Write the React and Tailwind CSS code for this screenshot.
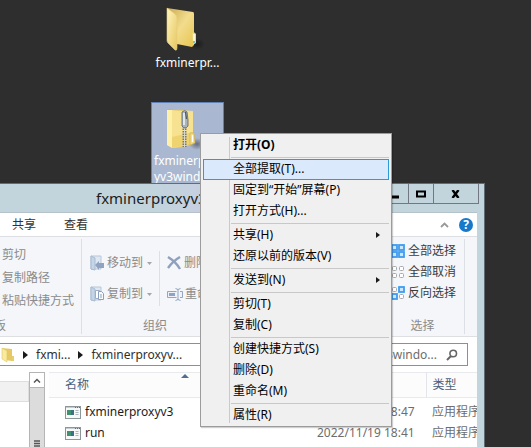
import React from "react";

function FolderIcon({ zip = false }) {
  return (
    <svg width="42" height="46" viewBox="0 0 42 46" aria-hidden="true">
      <defs>
        <linearGradient id="front" x1="0" x2="1" y1="0" y2="1">
          <stop offset="0" stopColor="#fff6bd" />
          <stop offset="1" stopColor="#e6c560" />
        </linearGradient>
        <linearGradient id="back" x1="0" x2="1" y1="0" y2="1">
          <stop offset="0" stopColor="#c9a951" />
          <stop offset="0.5" stopColor="#f2dc8d" />
          <stop offset="1" stopColor="#e8c54e" />
        </linearGradient>
        <radialGradient id="shade">
          <stop offset="0" stopColor="#000" stopOpacity="0.4" />
          <stop offset="1" stopColor="#000" stopOpacity="0" />
        </radialGradient>
      </defs>
      <ellipse cx="33" cy="37" rx="8" ry="6" fill="url(#shade)" />
      {zip ? (
        <>
          <path d="M3 3l4-1 22 2v33l-9 3-10 1-7-3z" fill="url(#back)" />
          <path d="M3 3l5 0v38l-5-3z" fill="#fff1a8" />
          <path d="M8 3l21 2v31l-21 5z" fill="#f6e291" />
          <path d="M8 30l21-5v11l-21 5z" fill="#ecca5c" opacity="0.6" />
          <path d="M26 26h4l1 10-5 2z" fill="#f3dc80" stroke="#c9a84b" strokeWidth="0.6" />
          <path d="M28.500 28v7" stroke="#fff" strokeWidth="1.200" />
          <path d="M20.500 14v26" stroke="#73777b" strokeWidth="4" strokeDasharray="1.5 1" />
          <path d="M20.500 16v24" stroke="#d8d8ce" strokeWidth="1" />
          <path d="M18 5q3-3 5 0l1 8 0 6q-3 4-6 0l0-6z" fill="#a9b4bd" stroke="#59636b" strokeWidth="0.8" />
          <path d="M20 6v12" stroke="#f4f7f9" strokeWidth="1.500" />
          <path d="M21.500 5l1 7" stroke="#4c555d" strokeWidth="1.200" />
        </>
      ) : (
        <>
          <path d="M3 1l26 4q1 0 1 2v31l-2 2-15-3z" fill="url(#back)" />
          <path d="M28 26q2-2 4 1v9l-3 2z" fill="#efd87b" />
          <path d="M30 27v7" stroke="#fff" strokeWidth="1.500" />
          <path d="M30 34v2" stroke="#4fb8d2" strokeWidth="1.500" />
          <path d="M3 1l8 6q2 2 2 4v30q0 3-2 2l-7-7q-1-1-1-3z" fill="url(#front)" stroke="#e5cd79" strokeWidth="0.6" />
        </>
      )}
    </svg>
  );
}

function TransferIcon({ copy = false }) {
  return (
    <svg width="15" height="16" viewBox="0 0 15 16" aria-hidden="true">
      <path d="M1 1h10v13H1z" fill="#dfe8f2" stroke="#b7c6d8" />
      <path d="M1 1l4 2v12l-4-1z" fill="#c4d5e7" stroke="#a9bbd0" />
      {copy ? (
        <>
          <path d="M5.500 4.500h4v8h-4z" fill="#fff" stroke="#9dafc8" />
          <path d="M8.500 5.500h3l2 2v6h-5z" fill="#f8fafc" stroke="#8b9fbd" />
          <path d="M10 9h2M10 11h2" stroke="#8b9fbd" />
        </>
      ) : (
        <path d="M5 10l4-4v2h5v5H9v2z" fill="#8fa3c0" />
      )}
    </svg>
  );
}

function DeleteIcon() {
  return (
    <svg width="15" height="14" viewBox="0 0 15 14" aria-hidden="true">
      <path d="M1 1q8 5 12 12M13 1Q6 5 1 12" fill="none" stroke="#8fa0bf" strokeWidth="2.4" />
    </svg>
  );
}

function RenameIcon() {
  return (
    <svg width="16" height="13" viewBox="0 0 16 13" aria-hidden="true">
      <path d="M9.500 3.500h-9v6h9M13 3.500h2.500v6H13" fill="#eef2f8" stroke="#94a6c3" />
      <path d="M2 5h6v3H2z" fill="#8fa3c4" />
      <path d="M8.500.5l2.500 1 2.500-1M11 1.500v10M8.500 12.500l2.500-1 2.500 1" fill="none" stroke="#8ea2c2" />
    </svg>
  );
}

function GridIcon({ filled }) {
  const cells = [[1, 1], [8, 1], [1, 8], [8, 8]];
  return (
    <svg width="15" height="15" viewBox="0 0 15 15" aria-hidden="true">
      {cells.map(([x, y], i) =>
        filled[i] ? (
          <rect key={i} x={x} y={y} width="5" height="5" fill="#cbe7ff" stroke="#419bef" strokeWidth="1.800" />
        ) : (
          <rect key={i} x={x + 0.5} y={y + 0.5} width="4" height="4" rx="1" fill="#fff" stroke="#a5a8ab" />
        )
      )}
    </svg>
  );
}

function AppIcon() {
  return (
    <svg width="16" height="13" viewBox="0 0 16 13" aria-hidden="true">
      <rect x=".5" y=".5" width="15" height="12" fill="#f7f8f8" stroke="#8d9799" />
      <path d="M1 1.500h14" stroke="#c5cdd1" />
      <path d="M10 1.500h1M12 1.500h1M14 1.500h1" stroke="#56707d" />
      <path d="M2 4h7v5H2z" fill="#3e6f86" />
      <path d="M2 4h4v5H2z" fill="#3f9170" />
      <path d="M10.500 4.500h3M10.500 6.500h3M10.500 8.500h3" stroke="#a9b5bd" />
    </svg>
  );
}

function RightArrow() {
  return (
    <svg width="5" height="8" viewBox="0 0 5 8" className="shrink-0" aria-hidden="true">
      <path d="M0 0l5 4-5 4z" fill="#1a1a1a" />
    </svg>
  );
}

function SubmenuArrow() {
  return (
    <svg width="4" height="6" viewBox="0 0 4 6" className="shrink-0" aria-hidden="true">
      <path d="M0 0l4 3-4 3z" fill="#1a1a1a" />
    </svg>
  );
}

const menuGroups = [
  [{ label: "打开(O)", bold: true }],
  [{ label: "全部提取(T)...", active: true }, { label: "固定到“开始”屏幕(P)" }, { label: "打开方式(H)..." }],
  [{ label: "共享(H)", sub: true }, { label: "还原以前的版本(V)" }],
  [{ label: "发送到(N)", sub: true }],
  [{ label: "剪切(T)" }, { label: "复制(C)" }],
  [{ label: "创建快捷方式(S)" }, { label: "删除(D)" }, { label: "重命名(M)" }],
  [{ label: "属性(R)" }],
];

function ContextMenu() {
  return (
    <div
      role="menu"
      className="absolute left-[200px] top-[133px] w-48 border border-[#9c9c9c] bg-[#f0f0f0] bg-[linear-gradient(#cacaca,#cacaca)] bg-[length:1px_286px] bg-[position:28px_3px] bg-no-repeat px-0.5 pt-px shadow-[1px_1px_1px_#00000030]"
    >
      {menuGroups.map((group, g) => (
        <div key={g} role="group">
          {g > 0 && <div className="my-px ml-7 h-px bg-[#c8c8c8]" />}
          {group.map((item) => (
            <button
              key={item.label}
              role="menuitem"
              className={
                "flex h-[21px] w-full items-center justify-between border pb-px pl-[29px] pr-2 text-left text-black " +
                (item.active ? "border-[#2f9bd6] bg-[#dbe9fd]" : "border-transparent") +
                (item.bold ? " font-bold" : "")
              }
            >
              {item.label}
              {item.sub && <SubmenuArrow />}
            </button>
          ))}
        </div>
      ))}
    </div>
  );
}

function TitleBar() {
  return (
    <header className="flex h-7 justify-between bg-[linear-gradient(90deg,#c2d5dc_150px,#c6cfe1_200px,#c2d5dc_260px)]">
      <h1 className="pl-24 text-[15px] leading-7 text-[#1c1c1c]">fxminerproxyv3windows</h1>
      <div className="mr-[5px] flex h-5 border-b border-l border-[#737783] text-black">
        <button aria-label="最小化" className="flex w-7 items-center justify-center border-r border-[#737783]">
          <svg width="11" height="10"><path d="M1 8h9" stroke="currentColor" strokeWidth="3" /></svg>
        </button>
        <button aria-label="最大化" className="flex w-[25px] items-center justify-center border-r border-[#737783]">
          <svg width="10" height="8"><path d="M1 1.500h8v5H1z" fill="none" stroke="currentColor" strokeWidth="2" /></svg>
        </button>
        <button aria-label="关闭" className="flex w-[45px] items-center justify-center border-r border-[#737783]">
          <svg width="10" height="8"><path d="M1.500 0l6 8M7.500 0l-6 8" stroke="currentColor" strokeWidth="2.400" /></svg>
        </button>
      </div>
    </header>
  );
}

function RibbonButton({ icon, children, menu }) {
  return (
    <button className="flex h-4 items-center gap-0.5 whitespace-nowrap">
      {icon}
      {children}
      {menu && (
        <svg width="5" height="3" className="ml-0.5"><path d="M0 0h5L2.500 3z" fill="#a6a6a6" /></svg>
      )}
    </button>
  );
}

function Ribbon() {
  return (
    <div className="flex h-[101px] border-y border-[#dddfe2] bg-[#f4f6f9] py-0.5 text-[#8b8b8b]">
      <section className="flex w-[82px] shrink-0 flex-col border-r border-[#dcdfe3] pl-0.5">
        <div className="flex h-[82px] flex-col items-start gap-[7px] whitespace-nowrap pt-2">
          <button className="h-4 leading-4">剪切</button>
          <button className="h-4 leading-4">复制路径</button>
          <button className="h-4 leading-4">粘贴快捷方式</button>
        </div>
        <h2 className="-ml-8 h-4 leading-4">剪贴板</h2>
      </section>
      <section className="flex w-[146px] shrink-0 flex-col">
        <div className="flex h-[82px] pl-2">
          <div className="my-3 flex w-[70px] flex-col justify-center gap-[15px] border-r border-[#dcdfe3]">
            <RibbonButton icon={<TransferIcon />} menu>移动到</RibbonButton>
            <RibbonButton icon={<TransferIcon copy />} menu>复制到</RibbonButton>
          </div>
          <div className="my-3 flex flex-col justify-center gap-[15px] pl-[7px]">
            <RibbonButton icon={<DeleteIcon />}>删除</RibbonButton>
            <RibbonButton icon={<RenameIcon />}>重命名</RibbonButton>
          </div>
        </div>
        <h2 className="h-4 text-center leading-4">组织</h2>
      </section>
      <section className="ml-auto mr-3 flex w-[84px] flex-col border-r border-[#dcdfe3]">
        <div className="flex h-[82px] flex-col gap-[5px] pl-[10px] pt-1 text-[#3c3c3c]">
          <RibbonButton icon={<GridIcon filled={[1, 1, 1, 1]} />}>全部选择</RibbonButton>
          <RibbonButton icon={<GridIcon filled={[0, 0, 0, 0]} />}>全部取消</RibbonButton>
          <RibbonButton icon={<GridIcon filled={[0, 1, 1, 0]} />}>反向选择</RibbonButton>
        </div>
        <h2 className="h-4 text-center leading-4">选择</h2>
      </section>
    </div>
  );
}

function AddressRow() {
  return (
    <div className="flex h-[35px] items-start gap-1 pr-[9px] pt-[6px] text-[#303030]">
      <nav aria-label="地址" className="flex h-[23px] min-w-0 flex-1 items-center gap-2 border-y border-r border-[#8f8f8f] pl-px">
        <svg width="14" height="16" viewBox="0 0 14 16" aria-hidden="true">
          <path d="M1 1l10 1v12l-7-1z" fill="#e6c965" />
          <path d="M1 1l5 3v11l-5-3z" fill="#faea9d" stroke="#e0c768" strokeWidth=".6" />
          <path d="M11 9h2v5h-2z" fill="#e5ce70" />
        </svg>
        <RightArrow />
        <a href="#parent">fxmi...</a>
        <RightArrow />
        <a href="#folder">fxminerproxyv...</a>
      </nav>
      <div className="flex h-[23px] w-[208px] items-center gap-[9px] border border-[#8f8f8f] pr-[9px]">
        <input aria-label="搜索" defaultValue="搜索 fxminerproxyv3windo..." className="min-w-0 flex-1 text-right text-[#6d6d6d] outline-none" />
        <svg width="12" height="12" viewBox="0 0 12 12" aria-hidden="true">
          <circle cx="7.200" cy="4.500" r="3.300" fill="none" stroke="#666" strokeWidth="1.600" />
          <path d="M5 7l-4 4" stroke="#666" strokeWidth="2" />
        </svg>
      </div>
    </div>
  );
}

function FileList() {
  const files = [
    ["fxminerproxyv3", "2022/11/19 18:47"],
    ["run", "2022/11/19 18:41"],
  ];
  return (
    <div className="flex min-h-0 flex-1">
      <aside className="w-[29px] shrink-0 pt-[9px]">
        <div className="h-[21px] border border-l-0 border-[#dedede] bg-[#f1f1f1]" />
      </aside>
      <div className="flex w-4 shrink-0 flex-col border-x border-[#b5b5b5] bg-[#dcdcdc]">
        <button aria-label="向上滚动" className="flex h-4 shrink-0 items-center justify-center border-y border-[#b5b5b5] bg-white">
          <svg width="8" height="5"><path d="M1 4.500l3-3 3 3" fill="none" stroke="#555" strokeWidth="1.500" /></svg>
        </button>
        <svg width="6" height="8" className="mx-auto mt-auto"><path d="M0 2h6M0 4.500h6M0 7h6" stroke="#555" strokeWidth="1.300" /></svg>
      </div>
      <div className="min-w-0 flex-1 overflow-hidden pl-1">
        <table className="w-full table-fixed border-collapse whitespace-nowrap text-left text-[#6d6d6d]">
          <colgroup>
            <col className="w-[263px]" />
            <col className="w-[114px]" />
            <col />
          </colgroup>
          <thead className="text-[#4c607a]">
            <tr className="h-[25px] border-y border-[#e8eaed] bg-[#fcfcfd]">
              <th className="relative p-0 pl-4 font-normal">
                名称
                <svg width="8" height="4" className="absolute left-[132px] top-px"><path d="M0 4l4-4 4 4z" fill="#536d91" /></svg>
              </th>
              <th className="border-r border-[#e2e5e9] p-0 pl-[5px] font-normal">修改日期</th>
              <th className="p-0 pl-[6px] font-normal">类型</th>
            </tr>
          </thead>
          <tbody>
            <tr className="h-1" />
            {files.map(([name, date]) => (
              <tr key={name} className="h-[21px]">
                <td className="p-0 pl-4">
                  <div className="flex items-center gap-1 text-[#1c1c1c]">
                    <AppIcon />
                    {name}
                  </div>
                </td>
                <td className="p-0 pl-[5px]">{date}</td>
                <td className="p-0 pl-[6px]">应用程序</td>
              </tr>
            ))}
          </tbody>
        </table>
      </div>
    </div>
  );
}

export default function App() {
  return (
    <main className="relative h-screen w-full overflow-hidden bg-[#2e2e2e] font-['Noto_Sans','Noto_Sans_CJK_SC',sans-serif] text-xs leading-4">
      <figure className="absolute left-[151px] top-[7px] flex w-[73px] flex-col gap-0.5 text-white">
        <div className="h-[46px] pl-[13px]"><FolderIcon /></div>
        <figcaption className="text-center">fxminerpr...</figcaption>
      </figure>
      <figure className="absolute left-[151px] top-[102px] flex h-24 w-[73px] flex-col border border-[#5e82b5] bg-[#a9b8d0] text-white">
        <div className="mt-1 h-[46px] pl-3"><FolderIcon zip /></div>
        <figcaption className="whitespace-nowrap pl-0.5">fxminerprox<br />yv3windows</figcaption>
      </figure>
      <section className="absolute bottom-0 left-0 right-[46px] top-[183px] flex flex-col border-r border-t border-[#636b75] bg-[#c2d5dc]">
        <TitleBar />
        <div className="mr-[7px] flex min-h-0 flex-1 flex-col bg-white">
          <div className="flex h-6 items-center border-t border-[#b5c2c8] pl-3 pr-1 text-[#333]">
            <button>共享</button>
            <button className="ml-7">查看</button>
            <button aria-label="折叠功能区" className="ml-auto mr-2.5">
              <svg width="9" height="6"><path d="M1 5l3.500-3.500L8 5" fill="none" stroke="#999" strokeWidth="1.800" /></svg>
            </button>
            <button aria-label="帮助" className="h-3.5 w-3.5 rounded-full bg-[#1879cb] text-center font-bold leading-[14px] text-white">?</button>
          </div>
          <Ribbon />
          <AddressRow />
          <FileList />
        </div>
      </section>
      <ContextMenu />
    </main>
  );
}
